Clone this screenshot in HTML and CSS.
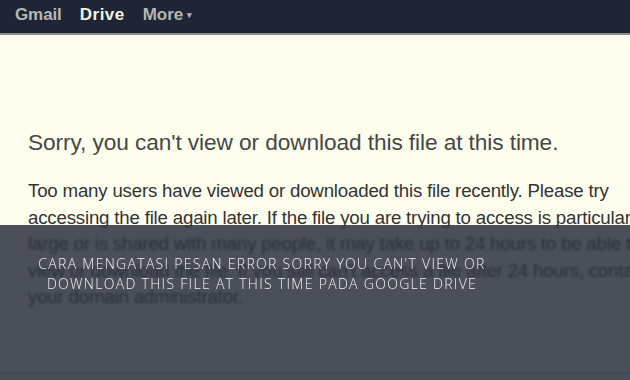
FILE: index.html
```html
<!DOCTYPE html>
<html>
<head>
<meta charset="utf-8">
<link rel="stylesheet" href="styles.css">
</head>
<body>
<div class="page">
  <header class="topbar">
    <nav class="nav">
      <span class="nav-item">Gmail</span>
      <span class="nav-item active">Drive</span>
      <span class="nav-item">More<span class="caret">&#9662;</span></span>
    </nav>
  </header>
  <main class="content">
    <h1 class="title">Sorry, you can't view or download this file at this time.</h1>
    <p class="msg">Too many users have viewed or downloaded this file recently. Please try<br>accessing the file again later. If the file you are trying to access is particularly<br>large or is shared with many people, it may take up to 24 hours to be able to<br>view or download the file. If you still can't access a file after 24 hours, contact<br>your domain administrator.</p>
  </main>
  <div class="overlay">
    <h2 class="caption">Cara Mengatasi Pesan Error Sorry You Can't View or<br>Download This File at This Time pada Google Drive</h2>
  </div>
  <div class="bottom"></div>
</div>
</body>
</html>
```
FILE: styles.css
```css
html, body {
  margin: 0;
  padding: 0;
}
body {
  width: 630px;
  height: 380px;
  overflow: hidden;
  background: #fefeef;
  font-family: "Liberation Sans", Arial, sans-serif;
}
.page {
  position: relative;
  width: 630px;
  height: 380px;
  overflow: hidden;
}
.topbar {
  height: 33px;
  background: #1f2536;
  border-bottom: 2px solid #8d8f8a;
  display: flex;
  align-items: center;
}
.nav {
  display: flex;
  gap: 18px;
  padding-left: 15px;
  padding-bottom: 4px;
}
.nav-item {
  font-size: 17px;
  color: #b4b8b4;
  font-weight: bold;
  letter-spacing: -0.1px;
}
.nav-item.active {
  color: #f2f2e0;
  letter-spacing: 0.5px;
}
.caret {
  font-size: 9px;
  margin-left: 4px;
  vertical-align: 2px;
}
.content {
  padding: 93px 0 0 28px;
  white-space: nowrap;
}
.title {
  margin: 0;
  font-size: 22.7px;
  font-weight: normal;
  color: #474747;
  line-height: 28px;
  letter-spacing: -0.1px;
}
.msg {
  margin: 22px 0 0;
  font-size: 18.7px;
  line-height: 26.5px;
  color: #333;
  letter-spacing: -0.2px;
}
.overlay {
  position: absolute;
  left: 0;
  top: 225px;
  width: 630px;
  height: 147px;
  background: rgba(42, 48, 62, 0.85);
  backdrop-filter: blur(1px);
  display: flex;
  justify-content: center;
  padding-right: 106px;
  box-sizing: border-box;
}
.caption {
  margin: 29px 0 0;
  font-family: "Open Sans", sans-serif;
  font-weight: 300;
  font-size: 14px;
  line-height: 20px;
  letter-spacing: 1.3px;
  text-transform: uppercase;
  color: #f2f2f2;
  text-align: center;
  white-space: nowrap;
}
.bottom {
  position: absolute;
  left: 0;
  top: 372px;
  width: 630px;
  height: 8px;
  background: #484e58;
  border-top: 1px solid #424852;
}
```
